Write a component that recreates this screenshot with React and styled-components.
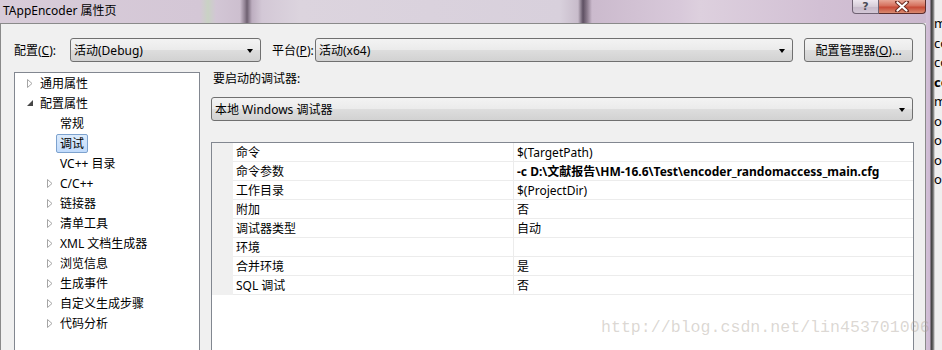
import React from 'react';
import styled, { createGlobalStyle } from 'styled-components';

const Global = createGlobalStyle`
  html, body { margin: 0; padding: 0; background: #f0f0f0; }
  body {
    font-family: "Noto Sans", "Noto Sans CJK SC", sans-serif;
    font-size: 12px;
    color: #000;
  }
`

const Screen = styled.div`
  position: relative;
  display: flex;
  width: 942px;
  height: 350px;
  overflow: hidden;
`
const LeftCol = styled.div`
  display: flex;
  flex-direction: column;
  width: 926px;
  flex: none;
`
const TitleBar = styled.div`
  display: flex;
  align-items: flex-start;
  height: 23px;
  flex: none;
  background: linear-gradient(90deg,
    #d8ccd9 0px, #d4c7d6 200px, #c9d2c4 208px, #d2c6d5 216px,
    #cdbfcf 240px, #8e7f90 245px, #6e6070 247px, #bdaec0 252px,
    #d3c8d6 262px, #dcd4de 300px, #d8d0dc 560px, #c8bccb 578px,
    #5e5062 583px, #8a7a8c 587px, #cbbacd 592px, #d8c9da 680px,
    #ddd0de 700px, #d2c0d4 820px, #cbb8ce 926px);
`
const Title = styled.div`
  align-self: center;
  padding-left: 3px;
  line-height: 16px;
  margin-top: -1px;
`
const Caption = styled.div`
  display: flex;
  margin-left: auto;
`
const HelpBtn = styled.div`
  width: 25px;
  height: 13px;
  border: 1px solid #6f6273;
  border-top: none;
  border-bottom-left-radius: 4px;
  background: linear-gradient(#eee7ef, #d6cdd8 50%, #c6b9c9 51%, #d3c7d6);
  display: flex;
  align-items: center;
  justify-content: center;
  color: #4b4b55;
  font-family: "DejaVu Sans", sans-serif;
  font-size: 11px;
  font-weight: bold;
  line-height: 12px;
`
const CloseBtn = styled.div`
  width: 46px;
  height: 13px;
  border: 1px solid #5b2c2c;
  border-top: none;
  border-left: none;
  border-bottom-right-radius: 4px;
  background: linear-gradient(#e7a797, #d5705c 45%, #c74a36 55%, #d98a70);
  display: flex;
  align-items: center;
  justify-content: center;
`

const Dialog = styled.div`
  flex: 1;
  display: flex;
  flex-direction: column;
  background: #f0f0f0;
  border: 1px solid #8a8a8a;
  border-bottom: none;
  border-top-right-radius: 4px;
  padding: 14px 12px 0 13px;
`
const TopRow = styled.div`
  display: flex;
  align-items: center;
  height: 24px;
`
const Label = styled.span`
  width: ${p => p.$w}px;
  flex: none;
  margin-left: ${p => p.$ml || 0}px;
  white-space: nowrap;
`
const Combo = styled.div`
  box-sizing: border-box;
  display: flex;
  align-items: center;
  width: ${p => p.$w ? p.$w + 'px' : 'auto'};
  flex: ${p => p.$grow ? '1' : 'none'};
  height: 24px;
  border: 1px solid #707070;
  border-radius: 3px;
  background: linear-gradient(#f3f3f3, #ebebeb 48%, #dddddd 52%, #d2d2d2);
  padding: 0 7px 0 3px;
  white-space: nowrap;
`
const ComboText = styled.span`
  flex: 1;
`
const Arrow = styled.span`
  width: 0;
  height: 0;
  border-left: 3.5px solid transparent;
  border-right: 3.5px solid transparent;
  border-top: 4px solid #000;
  margin-top: 1px;
`
const Button = styled.div`
  box-sizing: border-box;
  width: 109px;
  height: 24px;
  margin-left: 11px;
  border: 1px solid #707070;
  border-radius: 3px;
  background: linear-gradient(#f3f3f3, #ebebeb 48%, #dddddd 52%, #d2d2d2);
  display: flex;
  align-items: center;
  justify-content: center;
  white-space: nowrap;
`

const Body = styled.div`
  display: flex;
  gap: 11px;
  margin-top: 10px;
  flex: 1;
`
const Tree = styled.div`
  width: 184px;
  flex: none;
  background: #fff;
  border: 1px solid #828790;
  border-bottom: none;
`
const Item = styled.div`
  display: flex;
  align-items: center;
  height: 20px;
  padding-left: ${p => 12 + p.$level * 20}px;
`
const Toggle = styled.span`
  width: 9px;
  flex: none;
  display: flex;
  align-items: center;
`
const ItemLabel = styled.span`
  height: 17px;
  line-height: 17px;
  padding: 0 3px;
  border: 1px solid ${p => p.$sel ? '#7da2ce' : 'transparent'};
  border-radius: 2px;
  background: ${p => p.$sel ? 'linear-gradient(#dcebfc, #c1dbfc)' : 'none'};
  white-space: nowrap;
`

const Right = styled.div`
  flex: 1;
  display: flex;
  flex-direction: column;
`
const Caption2 = styled.div`
  line-height: 14px;
  padding-left: 2px;
`
const DebuggerCombo = styled(Combo)`
  margin-top: 11px;
`
const Grid = styled.div`
  margin-top: 21px;
  flex: 1;
  background: #fff;
  border: 1px solid #828790;
  border-bottom: none;
  margin-right: -1px;
`
const Row = styled.div`
  display: flex;
  height: 19px;
`
const Gutter = styled.div`
  width: 21px;
  flex: none;
  background: #f0f0f0;
`
const NameCell = styled.div`
  box-sizing: border-box;
  width: 281px;
  flex: none;
  border-bottom: 1px solid #ececec;
  border-right: 1px solid #ececec;
  padding-left: 3px;
  line-height: 19px;
  white-space: nowrap;
`
const ValueCell = styled.div`
  flex: 1;
  border-bottom: 1px solid #ececec;
  padding-left: 3px;
  line-height: 19px;
  white-space: nowrap;
  font-weight: ${p => p.$bold ? 'bold' : 'normal'};
`

const Strip = styled.div`
  width: 16px;
  flex: none;
  box-sizing: border-box;
  background: linear-gradient(90deg, #d3c0d8 0px, #cdb9d2 4px, #3c3c3c 5px, #6a6a6a 7px, #a8a8a8 8px, #efefef 9px);
  padding: 15px 0 0 8px;
  overflow: hidden;
`
const StripLine = styled.div`
  height: 19.5px;
  line-height: 16px;
  font-size: 13px;
  font-weight: ${p => p.$bold ? 'bold' : 'normal'};
  white-space: nowrap;
`

const Watermark = styled.div`
  position: absolute;
  left: 601px;
  top: 316px;
  font-family: "Liberation Mono", monospace;
  font-size: 16.6px;
  line-height: 24px;
  color: rgba(170, 160, 150, 0.42);
  white-space: nowrap;
  pointer-events: none;
`

const Collapsed = () => (
  <svg width="6" height="9" viewBox="0 0 6 9">
    <path d="M0.5 0.5 L5 4.5 L0.5 8.5 Z" fill="none" stroke="#a5a5a5" strokeWidth="1" />
  </svg>
)
const Expanded = () => (
  <svg width="6" height="6" viewBox="0 0 6 6">
    <path d="M6 0 L6 6 L0 6 Z" fill="#464646" />
  </svg>
)
const CloseX = () => (
  <svg width="14" height="11" viewBox="0 0 14 11">
    <path d="M2 1 L12 10 M12 1 L2 10" stroke="#6a2a20" strokeWidth="4" strokeLinecap="round" />
    <path d="M2.5 1.5 L11.5 9.5 M11.5 1.5 L2.5 9.5" stroke="#fff" strokeWidth="2.2" strokeLinecap="round" />
  </svg>
)

const treeItems = [
  { level: 0, text: '通用属性', state: 'closed' },
  { level: 0, text: '配置属性', state: 'open' },
  { level: 1, text: '常规' },
  { level: 1, text: '调试', selected: true },
  { level: 1, text: 'VC++ 目录' },
  { level: 1, text: 'C/C++', state: 'closed' },
  { level: 1, text: '链接器', state: 'closed' },
  { level: 1, text: '清单工具', state: 'closed' },
  { level: 1, text: 'XML 文档生成器', state: 'closed' },
  { level: 1, text: '浏览信息', state: 'closed' },
  { level: 1, text: '生成事件', state: 'closed' },
  { level: 1, text: '自定义生成步骤', state: 'closed' },
  { level: 1, text: '代码分析', state: 'closed' },
]

const props = [
  ['命令', '$(TargetPath)'],
  ['命令参数', '-c D:\\文献报告\\HM-16.6\\Test\\encoder_randomaccess_main.cfg', true],
  ['工作目录', '$(ProjectDir)'],
  ['附加', '否'],
  ['调试器类型', '自动'],
  ['环境', ''],
  ['合并环境', '是'],
  ['SQL 调试', '否'],
]

const stripText = ['m', 'co', 'co', 'co', 'm', 'oc', 'oc', 'od', 'o']

const App = () => {
  return (
    <Screen>
      <Global />
      <LeftCol>
        <TitleBar>
          <Title>TAppEncoder 属性页</Title>
          <Caption>
            <HelpBtn>?</HelpBtn>
            <CloseBtn><CloseX /></CloseBtn>
          </Caption>
        </TitleBar>
        <Dialog>
          <TopRow>
            <Label $w={56}>配置(<u>C</u>):</Label>
            <Combo $w={191}>
              <ComboText>活动(Debug)</ComboText>
              <Arrow />
            </Combo>
            <Label $w={43} $ml={11}>平台(<u>P</u>):</Label>
            <Combo $grow>
              <ComboText>活动(x64)</ComboText>
              <Arrow />
            </Combo>
            <Button>配置管理器(<u>O</u>)...</Button>
          </TopRow>
          <Body>
            <Tree>
              {treeItems.map((it, i) => (
                <Item key={i} $level={it.level}>
                  <Toggle>
                    {it.state === 'closed' ? <Collapsed /> : it.state === 'open' ? <Expanded /> : null}
                  </Toggle>
                  <ItemLabel $sel={it.selected}>{it.text}</ItemLabel>
                </Item>
              ))}
            </Tree>
            <Right>
              <Caption2>要启动的调试器:</Caption2>
              <DebuggerCombo>
                <ComboText>本地 Windows 调试器</ComboText>
                <Arrow />
              </DebuggerCombo>
              <Grid>
                {props.map(([name, value, bold], i) => (
                  <Row key={i}>
                    <Gutter />
                    <NameCell>{name}</NameCell>
                    <ValueCell $bold={bold}>{value}</ValueCell>
                  </Row>
                ))}
              </Grid>
            </Right>
          </Body>
        </Dialog>
      </LeftCol>
      <Strip>
        {stripText.map((t, i) => (
          <StripLine key={i} $bold={i === 3}>{t}</StripLine>
        ))}
      </Strip>
      <Watermark>http://blog.csdn.net/lin453701006</Watermark>
    </Screen>
  );
}

export default App;
